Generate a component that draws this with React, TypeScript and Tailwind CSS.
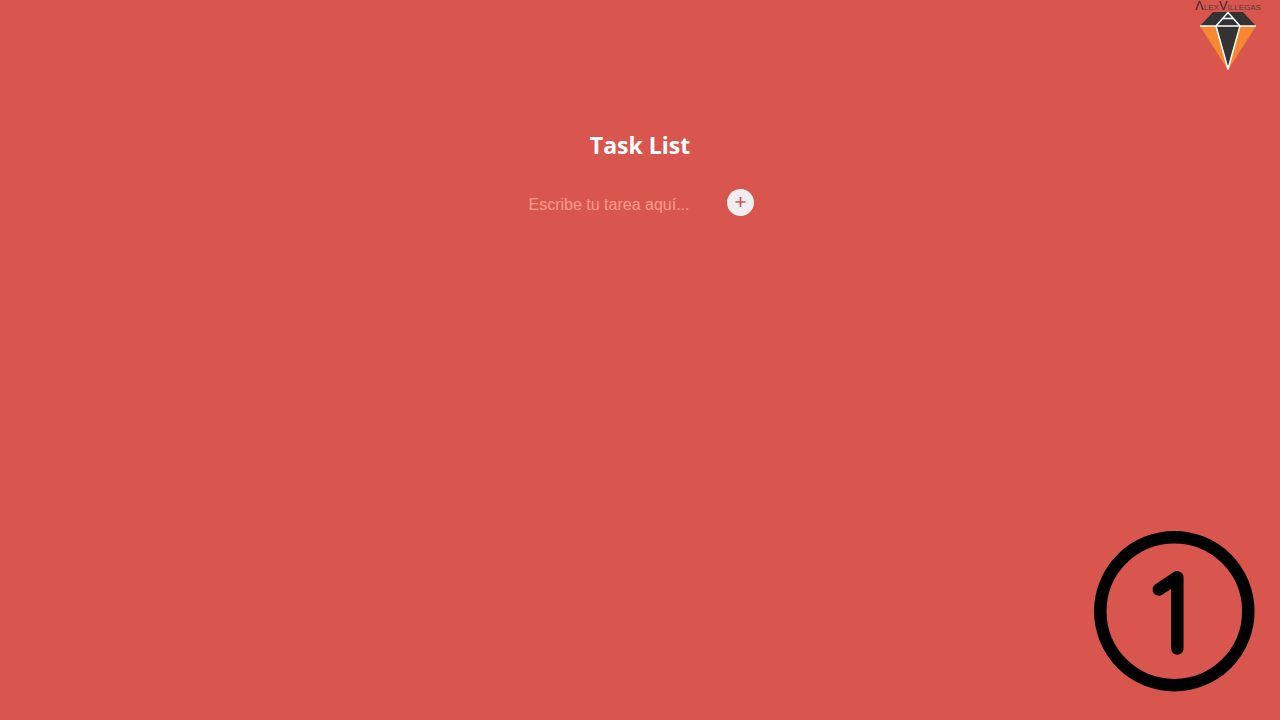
import { useState, type FormEvent } from "react";

function Logo() {
  return (
    <div className="flex w-[68px] flex-col items-center">
      <div className="flex h-[11px] items-baseline text-[8px] leading-[11px] whitespace-nowrap text-[#543c3c]">
        <span className="text-[13px] text-[#3a2a2a]">Λ</span>
        <span>LEX</span>
        <span className="text-[13px] text-[#3a2a2a]">V</span>
        <span>ILLEGAS</span>
      </div>
      <svg width="58" height="60" viewBox="0 0 58 60" aria-hidden="true">
        <path d="M14 1H44L57 15H1Z" fill="#343233" />
        <path d="M1 15H17L29 59Z M57 15H41L29 59Z" fill="#f78731" />
        <path d="M17 15H41L29 58Z" fill="#343233" />
        <path
          d="M1 15H57M17 15L29 58L41 15L29 1.5L17 15M24 7.5H34"
          fill="none"
          stroke="#fff"
          strokeWidth="1.5"
          strokeLinejoin="round"
        />
      </svg>
    </div>
  );
}

export default function App() {
  const [task, setTask] = useState("");
  const [tasks, setTasks] = useState<string[]>([]);

  function addTask(event: FormEvent) {
    event.preventDefault();
    if (!task.trim()) return;
    setTasks([...tasks, task.trim()]);
    setTask("");
  }

  return (
    <div className="flex min-h-screen flex-col bg-[#d9564f] font-['Liberation_Sans',Arial,sans-serif] text-white">
      <header className="flex justify-end pr-[18px]">
        <Logo />
      </header>
      <main className="flex flex-1 flex-col items-center pt-[58px]">
        <h1 className="font-['Open_Sans',sans-serif] text-[23px] leading-8 font-bold">Task List</h1>
        <form onSubmit={addTask} className="mt-[27px] flex gap-4">
          <input
            type="text"
            aria-label="Escribe tu tarea aquí..."
            placeholder="Escribe tu tarea aquí..."
            value={task}
            onChange={(event) => setTask(event.target.value)}
            className="h-8 w-[184px] bg-transparent px-0.5 pt-0.5 text-[16px] leading-5 outline-none placeholder:text-[#ff9a8b]"
          />
          <button
            type="submit"
            aria-label="Añadir tarea"
            className="mt-px flex size-[27px] items-center justify-center rounded-full bg-[#efefef] text-[#d9485a]"
          >
            <svg width="11" height="11" viewBox="0 0 11 11" fill="none" stroke="currentColor" strokeWidth="1.7" aria-hidden="true">
              <path d="M5.5 0V10M0.5 5H10.5" />
            </svg>
          </button>
        </form>
        <ul className="mt-4 flex flex-col gap-2">
          {tasks.map((item, index) => (
            <li key={index}>{item}</li>
          ))}
        </ul>
      </main>
      <footer className="flex justify-end pr-[25px] pb-[28px]">
        <svg width="162" height="162" viewBox="0 0 162 162" fill="none" stroke="#000" strokeLinecap="round" strokeLinejoin="round" role="img" aria-label="Uno">
          <circle cx="81.3" cy="81.2" r="74" strokeWidth="12.5" />
          <path d="M65.8 59.5L84.3 47.3V118.5" strokeWidth="12.5" />
        </svg>
      </footer>
    </div>
  );
}
